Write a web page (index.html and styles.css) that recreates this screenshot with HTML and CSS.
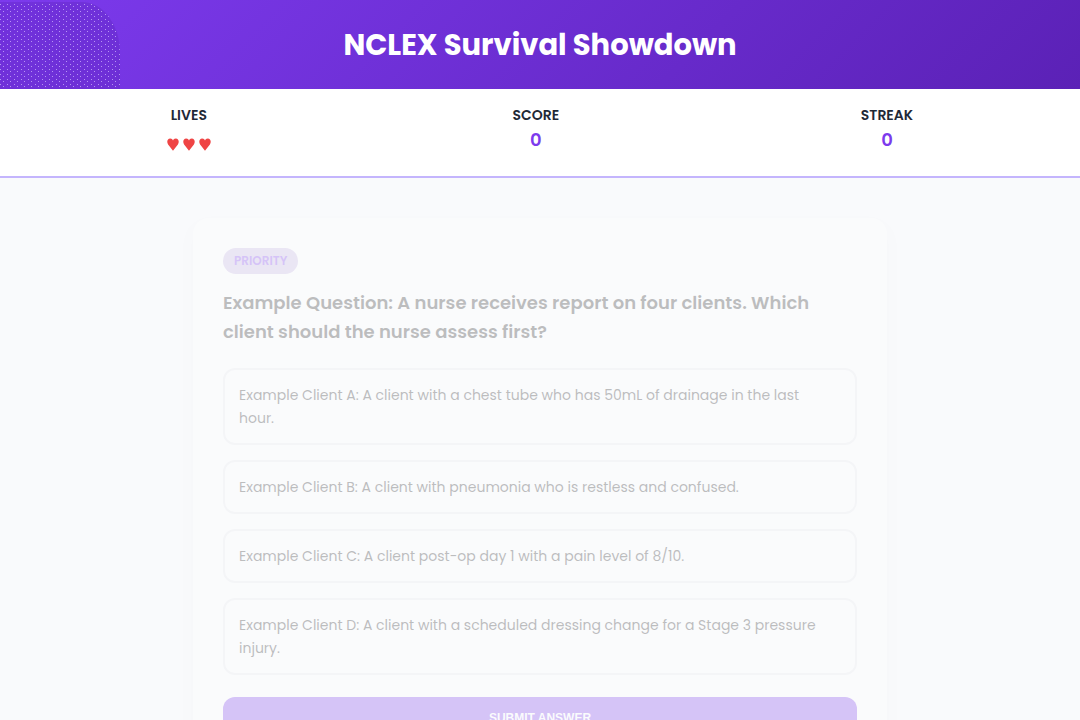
FILE: index.html
```html
<!DOCTYPE html>
<html lang="en">
<head>
    <meta charset="UTF-8">
    <meta name="viewport" content="width=device-width, initial-scale=1.0">
    <title>NCLEX Survival Showdown</title>
    <link rel="stylesheet" href="styles.css">
</head>
<body>

    <header class="header">
        <h1>NCLEX Survival Showdown</h1>
    </header>

    <section class="stats">
        <div class="stat">
            <div class="stat-label">LIVES</div>
            <div class="hearts" role="img" aria-label="3 lives">
                <svg class="heart" viewBox="0 0 12 13"><path d="M6 12.8 L1.1 6.5 C-0.6 4 0.4 0.6 3.2 0.6 C4.7 0.6 5.6 1.4 6 2.6 C6.4 1.4 7.3 0.6 8.8 0.6 C11.6 0.6 12.6 4 10.9 6.5 Z"/></svg>
                <svg class="heart" viewBox="0 0 12 13"><path d="M6 12.8 L1.1 6.5 C-0.6 4 0.4 0.6 3.2 0.6 C4.7 0.6 5.6 1.4 6 2.6 C6.4 1.4 7.3 0.6 8.8 0.6 C11.6 0.6 12.6 4 10.9 6.5 Z"/></svg>
                <svg class="heart" viewBox="0 0 12 13"><path d="M6 12.8 L1.1 6.5 C-0.6 4 0.4 0.6 3.2 0.6 C4.7 0.6 5.6 1.4 6 2.6 C6.4 1.4 7.3 0.6 8.8 0.6 C11.6 0.6 12.6 4 10.9 6.5 Z"/></svg>
            </div>
        </div>
        <div class="stat">
            <div class="stat-label">SCORE</div>
            <div class="stat-value" id="score">0</div>
        </div>
        <div class="stat">
            <div class="stat-label">STREAK</div>
            <div class="stat-value" id="streak">0</div>
        </div>
    </section>

    <main class="card">
        <div class="category">PRIORITY</div>
        <h2 class="question">Example Question: A nurse receives report on four clients. Which client should the nurse assess first?</h2>

        <div class="options">
            <button type="button" class="option">Example Client A: A client with a chest tube who has 50mL of drainage in the last hour.</button>
            <button type="button" class="option">Example Client B: A client with pneumonia who is restless and confused.</button>
            <button type="button" class="option">Example Client C: A client post-op day 1 with a pain level of 8/10.</button>
            <button type="button" class="option">Example Client D: A client with a scheduled dressing change for a Stage 3 pressure injury.</button>
        </div>

        <button type="button" class="submit">SUBMIT ANSWER</button>
    </main>

</body>
</html>
```
FILE: styles.css
```css
* {
    box-sizing: border-box;
    margin: 0;
    padding: 0;
}

/* the page scrolls, but without a visible bar */
html {
    scrollbar-width: none;
}

body {
    font-family: 'Poppins', 'Inter', sans-serif;
    background-color: #f9fafc;
    color: #1f2937;
}

.header {
    position: relative;
    overflow: hidden;
    padding: 25px 16px 23px;
    background: linear-gradient(135deg, #7c3aed, #5b21b6);
    color: #fff;
    text-align: center;
}

/* dotted glow in the corner */
.header::before {
    content: "";
    position: absolute;
    top: 2px;
    left: -80px;
    width: 200px;
    height: 120px;
    border-top-right-radius: 38px 50px;
    background-color: rgba(91, 33, 182, 0.3);
    background-image:
        radial-gradient(circle, #b794f4 0, transparent 1px),
        radial-gradient(circle, #b794f4 0, transparent 1px);
    background-size: 7px 5px;
    background-position: 0 0, 3px 2px;
}

h1 {
    position: relative;
    font-size: 29px;
    font-weight: 700;
    line-height: 41px;
}

.stats {
    display: flex;
    justify-content: space-around;
    padding: 15px 16px 22px;
    background-color: #fff;
    border-bottom: 2px solid #c4b5fd;
}

.stat {
    text-align: center;
}

.stat-label {
    font-size: 14px;
    font-weight: 600;
    line-height: 22px;
}

.stat-value {
    color: #7c3aed;
    font-size: 18px;
    font-weight: 600;
    line-height: 28px;
}

.hearts {
    display: flex;
    justify-content: center;
    gap: 4px;
    padding-top: 12px;
}

.heart {
    width: 12px;
    height: 13px;
    fill: #ef4444;
}

.card {
    max-width: 694px;
    margin: 40px auto;
    padding: 30px;
    border-radius: 16px;
    background-color: #fff;
    box-shadow: 0 8px 16px rgba(0, 0, 0, 0.04);
    opacity: 0.28;
}

.category {
    width: fit-content;
    padding: 0 11px;
    border-radius: 16px;
    background-color: #c4b3e1;
    color: #7c3aed;
    font-size: 12px;
    font-weight: 600;
    line-height: 26px;
}

.question {
    margin: 14px 0 22px;
    color: #222;
    font-size: 18px;
    font-weight: 600;
    line-height: 29px;
}

.options {
    display: grid;
    gap: 15px;
}

.option {
    padding: 14px 20px 13px 14px;
    border: 2px solid #e8eaed;
    border-radius: 12px;
    background-color: transparent;
    color: #222;
    font-family: inherit;
    font-size: 14px;
    line-height: 23px;
    text-align: left;
    cursor: pointer;
}

.submit {
    width: 100%;
    margin-top: 22px;
    padding: 14px;
    border: none;
    border-radius: 12px;
    background-color: #7c3aed;
    color: #fff;
    font-family: 'Liberation Sans', sans-serif;
    font-size: 12px;
    font-weight: 700;
    cursor: pointer;
}
```
